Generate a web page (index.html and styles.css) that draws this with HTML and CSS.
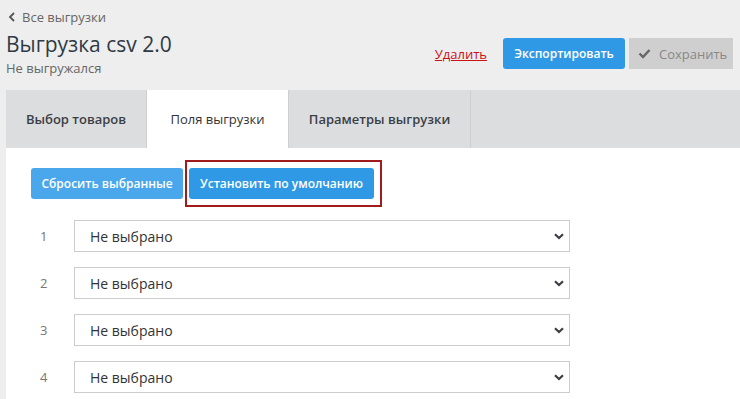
FILE: index.html
```html
<!DOCTYPE html>
<html lang="ru">
<head>
    <meta charset="UTF-8">
    <title>Выгрузка csv 2.0</title>
    <link rel="stylesheet" href="styles.css">
</head>
<body>

    <div class="page-head">
        <div class="head-left">
            <a class="back-link" href="#">
                <svg width="8" height="10" viewBox="0 0 8 10"><path d="M6 1 L2 5 L6 9" fill="none" stroke="#555" stroke-width="1.8"/></svg>
                Все выгрузки
            </a>
            <h1>Выгрузка csv 2.0</h1>
            <div class="status">Не выгружался</div>
        </div>
        <div class="head-actions">
            <a class="delete-link" href="#">Удалить</a>
            <button class="btn btn-blue">Экспортировать</button>
            <button class="btn btn-save">
                <svg width="13" height="11" viewBox="0 0 13 11"><path d="M1.5 5.5 L5 9 L11.5 2" fill="none" stroke="#666" stroke-width="2.4"/></svg>
                Сохранить
            </button>
        </div>
    </div>

    <div class="tabs">
        <div class="tab">Выбор товаров</div>
        <div class="tab active">Поля выгрузки</div>
        <div class="tab">Параметры выгрузки</div>
    </div>

    <div class="panel">
        <div class="panel-buttons">
            <button class="btn btn-light">Сбросить выбранные</button>
            <div class="highlight">
                <button class="btn btn-blue">Установить по умолчанию</button>
            </div>
        </div>

        <div class="fields" id="fields">
            <!-- rows are generated below -->
        </div>
    </div>

    <script>
        const fieldsEl = document.getElementById("fields");

        for (let i = 1; i <= 4; i++) {
            let row = document.createElement("div");
            row.className = "field-row";
            row.innerHTML = `
                <span class="field-num">${i}</span>
                <div class="select-wrap">
                    <select><option>Не выбрано</option></select>
                    <svg class="select-arrow" width="10" height="7" viewBox="0 0 10 7"><path d="M1 1.2 L5 5 L9 1.2" fill="none" stroke="#3a3f45" stroke-width="2.2"/></svg>
                </div>
            `;
            fieldsEl.appendChild(row);
        }
    </script>

</body>
</html>
```

FILE: styles.css
```css
body {
    margin: 0;
    background-color: #eeeeee;
    font-family: 'Open Sans', 'Noto Sans', sans-serif;
    color: #333;
}

.page-head {
    display: flex;
    justify-content: space-between;
    align-items: flex-start;
    padding: 9px 7px 0 6px;
    height: 81px;
    box-sizing: border-box;
}

.back-link {
    display: flex;
    align-items: center;
    gap: 6px;
    font-size: 13px;
    color: #666;
    text-decoration: none;
    line-height: 16px;
    padding-left: 2px;
}

h1 {
    margin: 5px 0 0 0;
    font-size: 21px;
    font-weight: 400;
    color: #2f3a45;
    line-height: 28px;
}

.status {
    margin-top: 1px;
    font-size: 13px;
    color: #666;
    line-height: 18px;
}

.head-actions {
    display: flex;
    align-items: center;
    margin-top: 29px;
}

.delete-link {
    color: #cc1111;
    font-size: 13px;
    text-decoration: underline;
    margin-right: 16px;
}

.btn {
    font-family: 'Open Sans', 'Noto Sans', sans-serif;
    font-size: 12px;
    font-weight: 600;
    border: none;
    border-radius: 3px;
    height: 31px;
    padding: 0 11px;
    color: #fff;
    cursor: pointer;
}

.btn-blue {
    background-color: #2f99e6;
}

.btn-light {
    background-color: #4aa7ec;
}

.btn-save {
    margin-left: 4px;
    background-color: #cfcfcf;
    color: #888;
    font-weight: 400;
    font-size: 13px;
    border-radius: 0;
    width: 104px;
    display: flex;
    align-items: center;
    gap: 8px;
    padding: 0 0 0 9px;
}

.head-actions .btn-blue {
    width: 122px;
    padding: 0;
}

.tabs {
    display: flex;
    margin-left: 6px;
    margin-top: 9px;
    height: 58px;
    background-color: #dcdddf;
}

.tab {
    display: flex;
    align-items: center;
    justify-content: center;
    font-size: 13px;
    font-weight: 600;
    color: #3b3f45;
    border-right: 1px solid #cfcfcf;
}

.tab:nth-child(1) {
    width: 140px;
}

.tab:nth-child(2) {
    width: 141px;
}

.tab:nth-child(3) {
    width: 181px;
}

.tab.active {
    background-color: #fff;
    font-weight: 400;
    color: #333;
}

.panel {
    margin-left: 6px;
    background-color: #fff;
    padding: 12px 0 30px 25px;
    min-height: 260px;
}

.panel-buttons {
    display: flex;
    align-items: center;
    gap: 2px;
}

.panel-buttons .btn-light {
    width: 152px;
    padding: 0;
}

.highlight {
    border: 2px solid #a31a1a;
    padding: 6px 6px 6px 2px;
}

.highlight .btn {
    width: 185px;
    padding: 0;
}

.fields {
    margin-top: 13px;
    display: flex;
    flex-direction: column;
    gap: 15px;
}

.field-row {
    display: flex;
    align-items: center;
}

.field-num {
    width: 43px;
    padding-left: 9px;
    box-sizing: border-box;
    font-size: 13px;
    color: #777;
}

.select-wrap {
    position: relative;
    width: 496px;
}

select {
    appearance: none;
    width: 100%;
    height: 32px;
    border: 1px solid #cccccc;
    border-radius: 0;
    background-color: #fff;
    font-family: 'Open Sans', 'Noto Sans', sans-serif;
    font-size: 14px;
    color: #333;
    padding: 0 15px;
}

.select-arrow {
    position: absolute;
    right: 6px;
    top: 13px;
    pointer-events: none;
}
```
